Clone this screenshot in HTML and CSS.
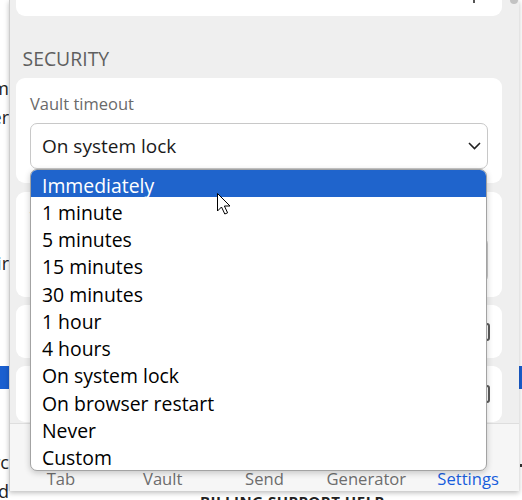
FILE: index.html
```html
<!DOCTYPE html>
<html lang="en">
<head>
<meta charset="utf-8">
<title>Settings</title>
<link rel="stylesheet" href="styles.css">
</head>
<body>
<div class="site">
  <div class="site-row r1"><span class="frag"><span>form</span></span></div>
  <div class="site-row r2"><span class="frag"><span>over</span></span></div>
  <div class="site-row r3"><span class="frag"><span>pair</span></span></div>
  <div class="site-row r4"><span class="blue-l"></span><span class="blue-r"></span></div>
  <div class="site-row r5"><span class="frag"><span>Sorc</span></span><span class="tick"></span></div>
  <div class="site-row r6"><span class="frag"><span>and</span></span><span class="foot-text">BILLING SUPPORT HELP</span></div>
</div>

<div class="popup">
  <div class="body-area">
    <div class="scroll">
      <div class="card card-top"><span class="top-mark"></span></div>
      <h2 class="section">SECURITY</h2>
      <div class="card field-card">
        <div class="label">Vault timeout</div>
        <div class="select"><span>On system lock</span>
          <svg class="chev" width="13" height="8" viewBox="0 0 13 8"><polyline points="1,1 6.5,6.5 12,1" fill="none" stroke="#222" stroke-width="1.6"/></svg>
        </div>
      </div>
      <div class="card field-card">
        <div class="label">Vault timeout action</div>
        <div class="select"><span>Lock</span>
          <svg class="chev" width="13" height="8" viewBox="0 0 13 8"><polyline points="1,1 6.5,6.5 12,1" fill="none" stroke="#222" stroke-width="1.6"/></svg>
        </div>
      </div>
      <div class="card check-card c3"><span>Unlock with PIN</span><span class="check"></span></div>
      <div class="card check-card c4"><span>Unlock with biometrics</span><span class="check"></span></div>
    </div>
    <div class="scrollbar"><div class="thumb"></div></div>
  </div>
  <nav class="tabs">
    <div class="tab"><svg width="22" height="22" viewBox="0 0 22 22"><rect x="3" y="4" width="16" height="14" rx="2" fill="none" stroke="#6d6d6d" stroke-width="1.6"/></svg><span>Tab</span></div>
    <div class="tab"><svg width="22" height="22" viewBox="0 0 22 22"><rect x="4" y="3" width="14" height="16" rx="2" fill="none" stroke="#6d6d6d" stroke-width="1.6"/></svg><span>Vault</span></div>
    <div class="tab"><svg width="22" height="22" viewBox="0 0 22 22"><path d="M3 11 L19 4 L15 18 L11 12 Z" fill="none" stroke="#6d6d6d" stroke-width="1.6"/></svg><span>Send</span></div>
    <div class="tab"><svg width="22" height="22" viewBox="0 0 22 22"><path d="M4 17 A8 8 0 1 1 18 17" fill="none" stroke="#6d6d6d" stroke-width="1.6"/></svg><span>Generator</span></div>
    <div class="tab active"><svg width="22" height="22" viewBox="0 0 22 22"><circle cx="11" cy="11" r="7" fill="none" stroke="#175ddc" stroke-width="1.6"/><circle cx="11" cy="11" r="2.5" fill="#175ddc"/></svg><span>Settings</span></div>
  </nav>
</div>

<div class="dropdown">
  <div class="opt active">Immediately</div>
  <div class="opt">1 minute</div>
  <div class="opt">5 minutes</div>
  <div class="opt">15 minutes</div>
  <div class="opt">30 minutes</div>
  <div class="opt">1 hour</div>
  <div class="opt">4 hours</div>
  <div class="opt">On system lock</div>
  <div class="opt">On browser restart</div>
  <div class="opt">Never</div>
  <div class="opt">Custom</div>
</div>

<svg class="cursor" width="18" height="24" viewBox="0 0 18 24"><path d="M1.5 1.5 V19 L5.5 15 L8.8 22 L11.6 20.8 L8.4 14 H14 Z" fill="#fff" stroke="#000" stroke-width="1" stroke-linejoin="miter"/></svg>
</body>
</html>
```

FILE: styles.css
```css
* { box-sizing: border-box; }

html, body {
  margin: 0;
  padding: 0;
}

body {
  width: 522px;
  height: 500px;
  overflow: hidden;
  position: relative;
  background: #fff;
  font-family: "Open Sans", "Noto Sans", sans-serif;
}

/* background web page */
.site {
  padding-top: 75px;
  font-size: 18px;
  color: #222;
}
.site-row {
  display: flex;
  justify-content: space-between;
  align-items: flex-start;
  line-height: 27px;
  height: 27px;
}
.frag {
  width: 9px;
  overflow: hidden;
  display: flex;
  justify-content: flex-end;
  white-space: nowrap;
}
.r2 { margin-top: 2px; }
.r3 { margin-top: 119px; }
.r4 { margin-top: 89px; height: 23px; }
.r5 { margin-top: 61px; height: 25px; align-items: center; }
.blue-l { width: 9px; height: 23px; background: #1a5fd0; }
.blue-r { width: 3px; height: 23px; background: #1a5fd0; }
.tick { width: 2px; height: 3px; background: #333; margin-top: 6px; }
.r6 { justify-content: flex-start; margin-top: 3px; }
.foot-text {
  margin-left: 191px;
  margin-top: 13px;
  font-size: 15px;
  font-weight: 700;
  line-height: 20px;
  letter-spacing: 0.5px;
  color: #222;
}

/* extension popup */
.popup {
  position: absolute;
  left: 9px;
  top: 0;
  width: 510px;
  height: 491px;
  border-left: 1px solid #cdcdcd;
  background: #efefef;
  box-shadow: 0 2px 5px rgba(0, 0, 0, 0.25);
  display: flex;
  flex-direction: column;
}
.body-area {
  flex: 1;
  min-height: 0;
  display: flex;
  overflow: hidden;
}
.scroll {
  flex: 1;
  padding: 0 7px 0 6px;
}
.scrollbar { width: 10px; }
.thumb {
  height: 4px;
  margin: 0 1px;
  background: #c3c3c3;
  border-radius: 0 0 5px 5px;
}

.card {
  background: #fff;
  border-radius: 9px;
}
.card-top {
  height: 16px;
  border-radius: 0 0 9px 9px;
  display: flex;
  justify-content: flex-end;
  padding-right: 27px;
}
.top-mark { width: 2px; height: 3px; background: #555; }

.section {
  margin: 29.5px 0 6.5px;
  padding-left: 6.5px;
  font-size: 19.4px;
  line-height: 26px;
  font-weight: 400;
  color: #5f5f5f;
}

.field-card {
  padding: 15px 14px 14px;
  margin-bottom: 9px;
}
.field-card + .field-card { margin-bottom: 8px; }
.label {
  font-size: 16.5px;
  line-height: 22px;
  color: #6a6a6a;
  margin-bottom: 8px;
}
.select {
  height: 46px;
  border: 1px solid #c8c8c8;
  border-radius: 7px;
  background: #fff;
  display: flex;
  align-items: center;
  justify-content: space-between;
  padding: 0 6px 0 11px;
  font-size: 19px;
  color: #1a1a1a;
}
.chev { display: block; }

.check-card {
  display: flex;
  align-items: center;
  justify-content: space-between;
  padding: 0 12px 0 14px;
  font-size: 17px;
  color: #1a1a1a;
}
.c3 { height: 53px; margin-bottom: 8px; }
.c4 { height: 56px; }
.check {
  width: 18px;
  height: 18px;
  border: 2px solid #5a5a5a;
  border-radius: 3px;
}

.tabs {
  height: 68px;
  flex: none;
  border-top: 1px solid #dedede;
  background: #f6f6f6;
  display: grid;
  grid-template-columns: repeat(5, 1fr);
}
.tab {
  display: flex;
  flex-direction: column;
  align-items: center;
  justify-content: flex-end;
  padding-bottom: 1px;
  font-size: 16.6px;
  line-height: 22px;
  color: #6d6d6d;
}
.tab svg { margin-bottom: 3px; }
.tab.active { color: #175ddc; }

/* native select dropdown list */
.dropdown {
  position: absolute;
  left: 30px;
  top: 169px;
  width: 457px;
  border: 1px solid #a3a3a3;
  border-radius: 7px;
  background: #fff;
  box-shadow: 0 2px 6px rgba(0, 0, 0, 0.2);
  overflow: hidden;
}
.opt {
  height: 27.27px;
  line-height: 27.27px;
  padding-top: 1.5px;
  padding-left: 11px;
  font-size: 19.4px;
  color: #000;
  white-space: nowrap;
}
.opt.active {
  background: #1f64cc;
  color: #fff;
}

.cursor {
  position: absolute;
  left: 216px;
  top: 192px;
}
```
